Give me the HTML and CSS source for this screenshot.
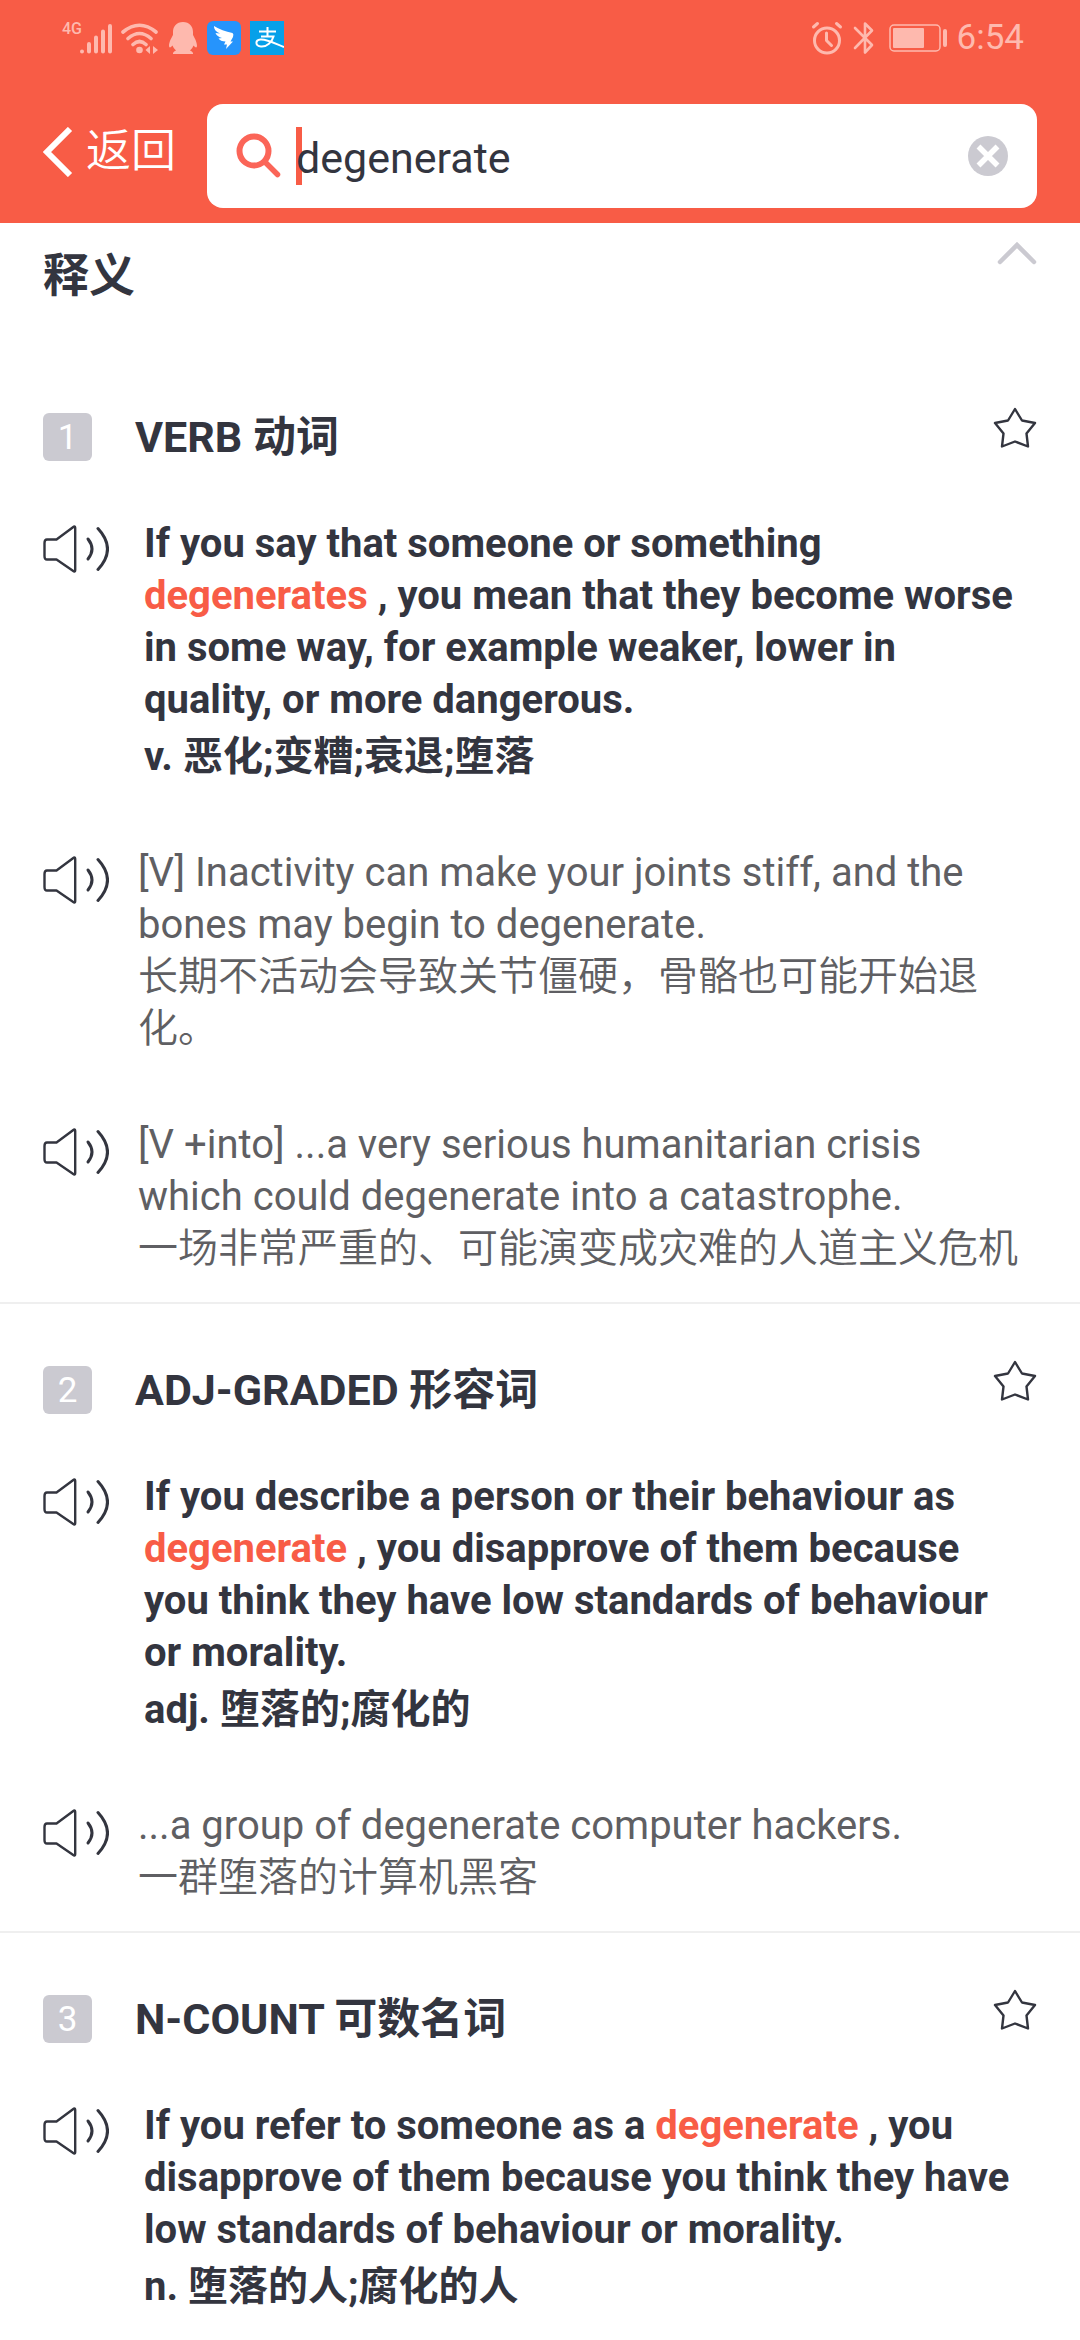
FILE: index.html
```html
<!DOCTYPE html>
<html lang="zh-CN">
<head>
<meta charset="utf-8">
<meta name="viewport" content="width=device-width, initial-scale=1">
<title>degenerate 释义</title>
<link rel="stylesheet" href="styles.css">
</head>
<body>
<svg class="sprite" aria-hidden="true">
  <symbol id="speaker" viewBox="0 0 66 48">
    <g fill="none" stroke="currentColor" stroke-width="2.4" stroke-linecap="round" stroke-linejoin="round">
      <path d="M4 14.5H13.5L31 1.5Q32.200 1 32.200 3V45Q32.200 47 31 46.500L13.500 34.500H4Q1.500 34.500 1.500 31V18Q1.500 14.500 4 14.500Z"/>
      <path d="M45 14Q53 24 45 34" stroke-width="3"/>
      <path d="M55 3.500Q74 24 55 44.500" stroke-width="3"/>
    </g>
  </symbol>
  <symbol id="star" viewBox="0 0 44 42">
    <path d="M22 2L29 13.500L42 16L33.500 26.500L35 39.500L22 34.500L9 39.500L10.500 26.500L2 16L15 13.500Z" fill="none" stroke="currentColor" stroke-width="2.400" stroke-linejoin="round"/>
  </symbol>
</svg>

<header class="top">
  <div class="status">
    <div class="status-group">
      <span class="net">4G</span>
      <svg class="signal" width="34" height="34" viewBox="0 0 34 34" fill="none" stroke="currentColor" stroke-width="4" stroke-linecap="round"><path d="M3 30.500V30.600M10 23V30.500M17 16.500V30.500M24 10.500V30.500M31 5V30.500"/></svg>
      <svg class="wifi" width="40" height="34" viewBox="0 0 40 34"><g fill="none" stroke="currentColor" stroke-width="3.600" stroke-linecap="round"><path d="M3 11Q19.500 -2.500 36 11M8 17.500Q19.500 7.500 31 17.500M13 23.500Q19.500 17.500 26 23.500"/></g><circle cx="19.500" cy="29" r="3.300" fill="currentColor"/><path d="M30 25V33L25.500 29ZM33 25V33L38 29Z" fill="currentColor"/></svg>
      <svg class="qq" width="30" height="34" viewBox="0 0 30 34"><path fill="currentColor" d="M15 1C8.500 1 5 5.500 5 11V14C4 16 1 20.500 1 25Q1.300 28 4.500 24.500Q5.500 27.500 8 29.500Q4.500 31 5 33H25Q25.500 31 22 29.500Q24.500 27.500 25.500 24.500Q28.700 28 29 25C29 20.500 26 16 25 14V11C25 5.500 21.500 1 15 1Z"/></svg>
      <svg class="app" width="34" height="34" viewBox="0 0 34 34"><rect width="34" height="34" rx="6" fill="#2694fc"/><path fill="#fff" d="M7 5Q15 10 25.500 12Q27 13 26 16L23.500 20.500H26L19 28L20 23.500H17L18.500 20.500Q13.500 20.500 11.500 17.500L15 17Q10 15.500 8.500 12L13 12.500Q6.500 9.500 7 5Z"/></svg>
      <svg class="app" width="34" height="34" viewBox="0 0 34 34"><rect width="34" height="34" fill="#06a0e9"/><g fill="none" stroke="#fff" stroke-width="2"><path d="M9 10.500H26M17.500 6V15M11 15.500H23.500C22 21 17 26 11 25.500C5 25 5 19 10.500 18.500C17 18 25 22.500 34 26"/></g></svg>
    </div>
    <div class="status-group">
      <svg class="alarm" width="32" height="34" viewBox="0 0 32 34" fill="none" stroke="currentColor" stroke-width="3" stroke-linecap="round" stroke-linejoin="round"><circle cx="16" cy="19.500" r="12.500"/><path d="M15.500 12V19.500L20.500 24.500"/><path d="M2.500 6L6.500 2.500M29.500 6L25.500 2.500"/></svg>
      <svg class="bt" width="22" height="34" viewBox="0 0 22 34" fill="none" stroke="currentColor" stroke-width="2.600" stroke-linecap="round" stroke-linejoin="round"><path d="M2 7L19 24L12 31.500V2.500L19 9.500L2 27"/></svg>
      <svg class="battery" width="60" height="30" viewBox="0 0 60 30"><rect x="1" y="2" width="50" height="26" rx="4" fill="none" stroke="currentColor" stroke-width="1.500"/><rect x="4" y="5" width="31" height="20" rx="1" fill="currentColor"/><rect x="54" y="6" width="4" height="18" rx="2" fill="currentColor"/></svg>
      <time class="clock">6:54</time>
    </div>
  </div>
  <form class="search-row" role="search">
    <button class="back" type="button">
      <svg width="30" height="50" viewBox="0 0 30 50" fill="none" stroke="currentColor" stroke-width="6"><path d="M27 2L4 25L27 48"/></svg>
      <span>返回</span>
    </button>
    <div class="search-box">
      <svg class="magnifier" width="46" height="46" viewBox="0 0 46 46" fill="none" stroke="#fb6558" stroke-width="6" stroke-linecap="round"><circle cx="18" cy="18" r="14.500"/><path d="M29 29L41.500 41.500" stroke-width="5.500"/></svg>
      <div class="field">
        <span class="caret"></span>
        <input class="query" type="text" value="degenerate" aria-label="搜索">
      </div>
      <button class="clear" type="reset" aria-label="清除">
        <svg width="40" height="40" viewBox="0 0 40 40"><circle cx="20" cy="20" r="20" fill="#cbcad1"/><path d="M10.500 10.500L29.500 29.500M29.500 10.500L10.500 29.500" stroke="#fff" stroke-width="5.500"/></svg>
      </button>
    </div>
  </form>
</header>

<main>
  <div class="panel-head">
    <h1 class="panel-title">释义</h1>
    <button class="collapse" type="button" aria-label="收起">
      <svg width="40" height="24" viewBox="0 0 40 24" fill="none" stroke="#cbcad1" stroke-width="4.500" stroke-linecap="round"><path d="M3 21L20 4L37 21"/></svg>
    </button>
  </div>

  <section class="sense">
    <div class="sense-head">
      <span class="badge">1</span>
      <h2 class="pos">VERB 动词</h2>
      <button class="fav" type="button" aria-label="收藏"><svg width="44" height="42"><use href="#star"/></svg></button>
    </div>
    <div class="entry definition">
      <button class="play" type="button" aria-label="朗读"><svg width="66" height="48"><use href="#speaker"/></svg></button>
      <div class="copy">
        <p>If you say that someone or something <em class="hit">degenerates</em> , you mean that they become worse in some way, for example weaker, lower in quality, or more dangerous.</p>
        <p class="gloss">v. 恶化;变糟;衰退;堕落</p>
      </div>
    </div>
    <div class="entry example">
      <button class="play" type="button" aria-label="朗读"><svg width="66" height="48"><use href="#speaker"/></svg></button>
      <div class="copy">
        <p>[V] Inactivity can make your joints stiff, and the bones may begin to degenerate.</p>
        <p class="zh">长期不活动会导致关节僵硬，骨骼也可能开始退化。</p>
      </div>
    </div>
    <div class="entry example">
      <button class="play" type="button" aria-label="朗读"><svg width="66" height="48"><use href="#speaker"/></svg></button>
      <div class="copy">
        <p>[V +into] ...a very serious humanitarian crisis which could degenerate into a catastrophe.</p>
        <p class="zh">一场非常严重的、可能演变成灾难的人道主义危机</p>
      </div>
    </div>
  </section>

  <section class="sense">
    <div class="sense-head">
      <span class="badge">2</span>
      <h2 class="pos">ADJ-GRADED 形容词</h2>
      <button class="fav" type="button" aria-label="收藏"><svg width="44" height="42"><use href="#star"/></svg></button>
    </div>
    <div class="entry definition">
      <button class="play" type="button" aria-label="朗读"><svg width="66" height="48"><use href="#speaker"/></svg></button>
      <div class="copy">
        <p>If you describe a person or their behaviour as <em class="hit">degenerate</em> , you disapprove of them because you think they have low standards of behaviour or morality.</p>
        <p class="gloss">adj. 堕落的;腐化的</p>
      </div>
    </div>
    <div class="entry example">
      <button class="play" type="button" aria-label="朗读"><svg width="66" height="48"><use href="#speaker"/></svg></button>
      <div class="copy">
        <p>...a group of degenerate computer hackers.</p>
        <p class="zh">一群堕落的计算机黑客</p>
      </div>
    </div>
  </section>

  <section class="sense">
    <div class="sense-head">
      <span class="badge">3</span>
      <h2 class="pos">N-COUNT 可数名词</h2>
      <button class="fav" type="button" aria-label="收藏"><svg width="44" height="42"><use href="#star"/></svg></button>
    </div>
    <div class="entry definition">
      <button class="play" type="button" aria-label="朗读"><svg width="66" height="48"><use href="#speaker"/></svg></button>
      <div class="copy">
        <p>If you refer to someone as a <em class="hit">degenerate</em> , you disapprove of them because you think they have low standards of behaviour or morality.</p>
        <p class="gloss">n. 堕落的人;腐化的人</p>
      </div>
    </div>
  </section>
</main>
</body>
</html>
```
FILE: styles.css
```css
* {
  box-sizing: border-box;
}

body {
  margin: 0;
  background: #fff;
  color: #33353f;
  font-family: Roboto, "Noto Sans CJK SC", sans-serif;
  font-size: 40px;
  line-height: 52px;
}

h1, h2, p {
  margin: 0;
}

button {
  margin: 0;
  padding: 0;
  border: 0;
  background: none;
  color: inherit;
  font: inherit;
}

svg {
  display: block;
  flex: none;
}

.sprite {
  display: none;
}

/* Header */
.top {
  padding-bottom: 15px;
  background: #f85c46;
}

.status {
  display: flex;
  justify-content: space-between;
  height: 104px;
  padding: 16px 56px 0 62px;
  color: #feb9ae;
}

.status-group {
  display: flex;
  align-items: center;
  height: 44px;
}

.net {
  align-self: flex-start;
  width: 17px;
  font-size: 16px;
  line-height: 26px;
  font-weight: 500;
}

.wifi {
  margin-left: 7px;
}

.qq {
  margin-left: 8px;
}

.app {
  margin-left: 9px;
}

.bt {
  margin-left: 10px;
}

.battery {
  margin-left: 14px;
}

.clock {
  margin-left: 8px;
  font-size: 35px;
  line-height: 44px;
}

.search-row {
  display: flex;
  align-items: center;
  padding: 0 43px;
}

.back {
  display: flex;
  align-items: center;
  gap: 13px;
  width: 164px;
  height: 104px;
  padding-bottom: 8px;
  color: #fff;
  font-size: 45px;
  font-weight: 350;
}

.search-box {
  display: flex;
  flex: 1;
  align-items: center;
  height: 104px;
  padding: 0 29px;
  border-radius: 16px;
  background: #fff;
}

.field {
  position: relative;
  flex: 1;
  margin-left: 14px;
}

.caret {
  position: absolute;
  top: 0;
  left: 0;
  width: 6px;
  height: 58px;
  background: #f85c46;
}

.query {
  position: relative;
  display: block;
  width: 100%;
  height: 58px;
  padding: 4px 0 0;
  border: 0;
  outline: 0;
  background: transparent;
  color: #33353f;
  font: 43px/54px Roboto, "Noto Sans CJK SC", sans-serif;
}

/* Panel title */
.panel-head {
  display: flex;
  justify-content: space-between;
  align-items: flex-start;
  height: 128px;
  padding: 18px 43px 0;
}

.panel-title {
  font-size: 46px;
  line-height: 68px;
  font-weight: 700;
}

/* Senses */
.sense {
  padding: 54px 43px 27px;
  border-bottom: 2px solid #efefef;
}

.sense:last-child {
  padding-bottom: 16px;
  border-bottom: 0;
}

.sense-head {
  display: flex;
  align-items: center;
  height: 64px;
  margin-bottom: 49px;
}

.badge {
  width: 49px;
  height: 48px;
  border-radius: 6px;
  background: #cbcad1;
  color: #fff;
  font-size: 35px;
  line-height: 50px;
  text-align: center;
}

.pos {
  flex: 1;
  padding-left: 43px;
  font-size: 43px;
  line-height: 64px;
  font-weight: 700;
}

.fav {
  align-self: flex-start;
  padding-top: 2px;
}

.entry {
  display: flex;
  align-items: flex-start;
}

.play {
  width: 66px;
  flex: none;
  padding-top: 7px;
}

.copy {
  flex: 1;
  padding-right: 15px;
}

.definition .copy {
  padding-left: 35px;
  font-weight: 700;
}

.hit {
  color: #f85c46;
  font-style: normal;
}

.gloss {
  line-height: 62px;
}

.example {
  color: #5f5f63;
}

.example .play {
  padding-top: 9px;
  color: #33353f;
}

.example .copy {
  padding-left: 29px;
}

.definition + .example {
  margin-top: 59px;
}

.example + .example {
  margin-top: 64px;
}

.zh {
  font-weight: 350;
}
```
